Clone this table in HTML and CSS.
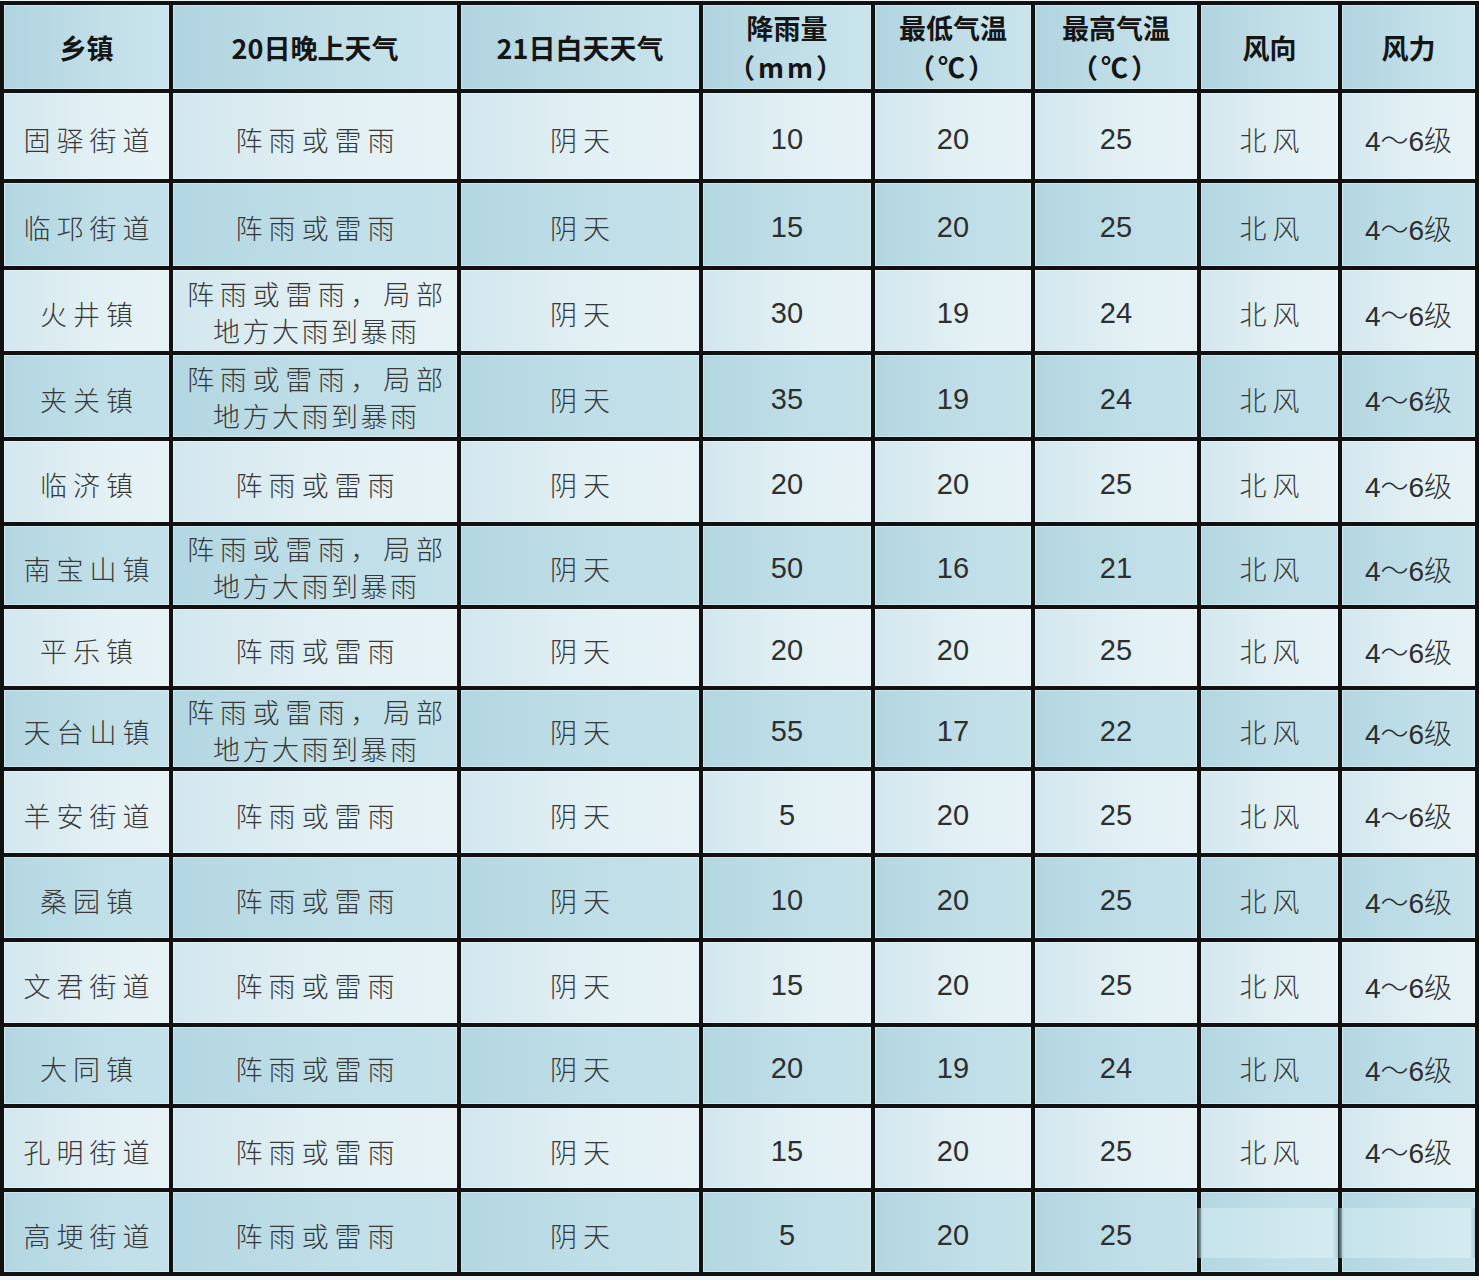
FILE: index.html
```html
<!DOCTYPE html>
<html lang="zh-CN">
<head>
<meta charset="utf-8">
<title>天气预报</title>
<link rel="stylesheet" href="styles.css">
</head>
<body>
<div class="sheet">
  <div class="c h">乡镇</div>
  <div class="c h">20日晚上天气</div>
  <div class="c h">21日白天天气</div>
  <div class="c h"><span class="hl">降雨量</span><span class="hl sub">（mm）</span></div>
  <div class="c h"><span class="hl">最低气温</span><span class="hl sub">（℃）</span></div>
  <div class="c h"><span class="hl">最高气温</span><span class="hl sub">（℃）</span></div>
  <div class="c h">风向</div>
  <div class="c h">风力</div>

  <div class="c l t">固驿街道</div><div class="c l t">阵雨或雷雨</div><div class="c l t">阴天</div><div class="c l n">10</div><div class="c l n">20</div><div class="c l n">25</div><div class="c l t">北风</div><div class="c l w">4～6级</div>

  <div class="c d t">临邛街道</div><div class="c d t">阵雨或雷雨</div><div class="c d t">阴天</div><div class="c d n">15</div><div class="c d n">20</div><div class="c d n">25</div><div class="c d t">北风</div><div class="c d w">4～6级</div>

  <div class="c l t">火井镇</div><div class="c l two"><span class="a">阵雨或雷雨，局部</span><span class="b">地方大雨到暴雨</span></div><div class="c l t">阴天</div><div class="c l n">30</div><div class="c l n">19</div><div class="c l n">24</div><div class="c l t">北风</div><div class="c l w">4～6级</div>

  <div class="c d t">夹关镇</div><div class="c d two"><span class="a">阵雨或雷雨，局部</span><span class="b">地方大雨到暴雨</span></div><div class="c d t">阴天</div><div class="c d n">35</div><div class="c d n">19</div><div class="c d n">24</div><div class="c d t">北风</div><div class="c d w">4～6级</div>

  <div class="c l t">临济镇</div><div class="c l t">阵雨或雷雨</div><div class="c l t">阴天</div><div class="c l n">20</div><div class="c l n">20</div><div class="c l n">25</div><div class="c l t">北风</div><div class="c l w">4～6级</div>

  <div class="c d t">南宝山镇</div><div class="c d two"><span class="a">阵雨或雷雨，局部</span><span class="b">地方大雨到暴雨</span></div><div class="c d t">阴天</div><div class="c d n">50</div><div class="c d n">16</div><div class="c d n">21</div><div class="c d t">北风</div><div class="c d w">4～6级</div>

  <div class="c l t">平乐镇</div><div class="c l t">阵雨或雷雨</div><div class="c l t">阴天</div><div class="c l n">20</div><div class="c l n">20</div><div class="c l n">25</div><div class="c l t">北风</div><div class="c l w">4～6级</div>

  <div class="c d t">天台山镇</div><div class="c d two"><span class="a">阵雨或雷雨，局部</span><span class="b">地方大雨到暴雨</span></div><div class="c d t">阴天</div><div class="c d n">55</div><div class="c d n">17</div><div class="c d n">22</div><div class="c d t">北风</div><div class="c d w">4～6级</div>

  <div class="c l t">羊安街道</div><div class="c l t">阵雨或雷雨</div><div class="c l t">阴天</div><div class="c l n">5</div><div class="c l n">20</div><div class="c l n">25</div><div class="c l t">北风</div><div class="c l w">4～6级</div>

  <div class="c d t">桑园镇</div><div class="c d t">阵雨或雷雨</div><div class="c d t">阴天</div><div class="c d n">10</div><div class="c d n">20</div><div class="c d n">25</div><div class="c d t">北风</div><div class="c d w">4～6级</div>

  <div class="c l t">文君街道</div><div class="c l t">阵雨或雷雨</div><div class="c l t">阴天</div><div class="c l n">15</div><div class="c l n">20</div><div class="c l n">25</div><div class="c l t">北风</div><div class="c l w">4～6级</div>

  <div class="c d t">大同镇</div><div class="c d t">阵雨或雷雨</div><div class="c d t">阴天</div><div class="c d n">20</div><div class="c d n">19</div><div class="c d n">24</div><div class="c d t">北风</div><div class="c d w">4～6级</div>

  <div class="c l t">孔明街道</div><div class="c l t">阵雨或雷雨</div><div class="c l t">阴天</div><div class="c l n">15</div><div class="c l n">20</div><div class="c l n">25</div><div class="c l t">北风</div><div class="c l w">4～6级</div>

  <div class="c d t">高埂街道</div><div class="c d t">阵雨或雷雨</div><div class="c d t">阴天</div><div class="c d n">5</div><div class="c d n">20</div><div class="c d n">25</div><div class="c d blur"><span class="veil"></span></div><div class="c d blur"><span class="veil"></span></div>
</div>
</body>
</html>
```

FILE: styles.css
```css
html, body {
  margin: 0;
  padding: 0;
  background: #eef3f5;
}

body {
  padding-top: 1px;
  font-family: "Noto Sans CJK SC", "Noto Sans", sans-serif;
}

.sheet {
  display: grid;
  width: 1479px;
  box-sizing: border-box;
  padding: 4px;
  gap: 4px;
  background: #111;
  grid-template-columns: 165px 284px 238px 168px 156px 162px 137px 133px;
  grid-template-rows: 84px 86px 83px 81px 82px 81px 79px 77px 77px 82px 81px 81px 77px 80px 80px;
}

.c {
  display: flex;
  flex-direction: column;
  align-items: center;
  justify-content: center;
  text-align: center;
  box-shadow: inset 0 0 0 1px rgba(255, 255, 255, 0.35);
}

.h {
  background: linear-gradient(90deg, #b0d4e0 0%, #c2dfe8 60%, #c9e4ec 100%);
  font-weight: 700;
  font-size: 27px;
  line-height: 37px;
  color: #151515;
}

.hl {
  display: block;
}

.sub {
  letter-spacing: 3px;
  padding-top: 2px;
}

.l {
  background: linear-gradient(90deg, #d2e7ee 0%, #e2f0f4 55%, #e7f2f6 100%);
}

.d {
  background: linear-gradient(90deg, #b3d7e2 0%, #bfdee7 55%, #c4e1ea 100%);
}

.t {
  font-size: 27px;
  font-weight: 300;
  color: #383838;
  letter-spacing: 6px;
  padding-left: 6px;
  padding-top: 6px;
  box-sizing: border-box;
}

.two {
  font-size: 27px;
  font-weight: 300;
  line-height: 37px;
  color: #383838;
  padding-top: 2px;
  box-sizing: border-box;
}

.two .a {
  display: block;
  letter-spacing: 5.7px;
  padding-left: 5.7px;
}

.two .b {
  display: block;
  letter-spacing: 2.5px;
  padding-left: 2.5px;
}

.n {
  font-family: "Liberation Sans", Arial, sans-serif;
  font-size: 29px;
  color: #2e2e2e;
  padding-top: 6px;
  box-sizing: border-box;
}

.w {
  font-family: "Liberation Sans", "Noto Sans CJK SC", sans-serif;
  font-size: 28px;
  font-weight: 300;
  color: #2e2e2e;
  padding-top: 6px;
  box-sizing: border-box;
}

.blur {
  position: relative;
}

.veil {
  position: absolute;
  left: -4px;
  right: 0;
  top: 16px;
  height: 50px;
  background: linear-gradient(90deg, rgba(60, 90, 95, 0.55) 0, rgba(200, 228, 236, 0.9) 6px, rgba(214, 236, 242, 0.9) 96%, rgba(160, 190, 200, 0.6) 100%);
}
```
